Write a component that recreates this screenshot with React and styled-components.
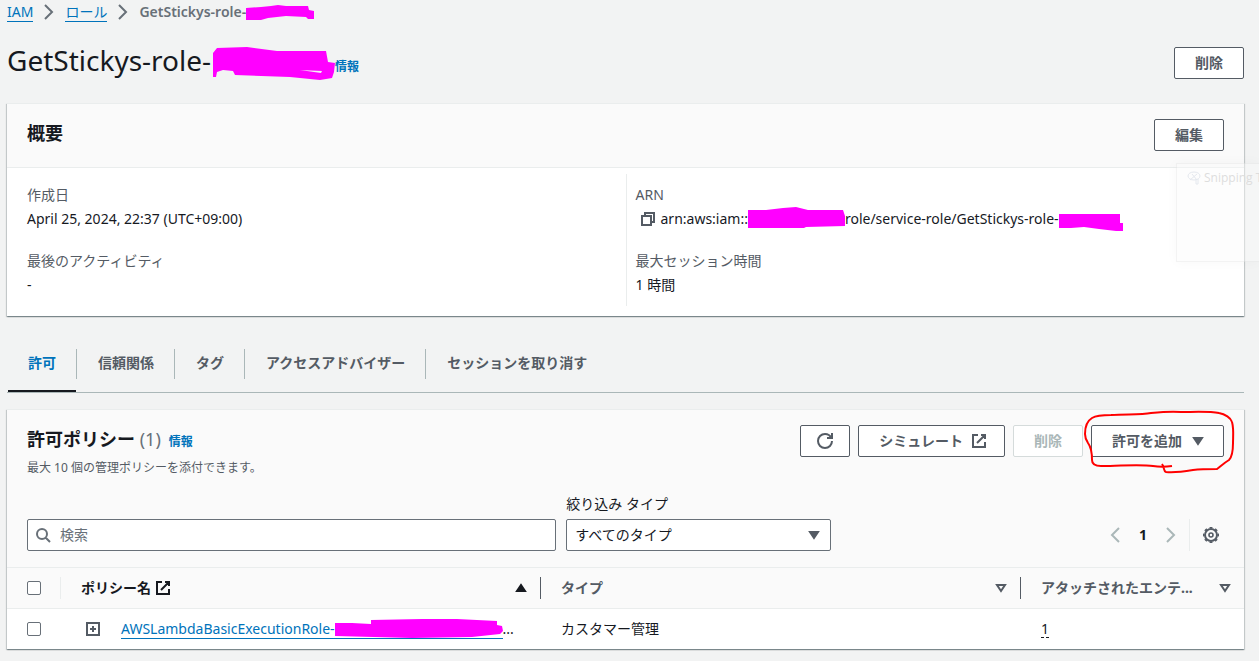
import styled, { createGlobalStyle } from "styled-components";

const App = () => {
  return (
    <>
      <GlobalStyle />
      <Page>
        <Breadcrumb aria-label="パンくずリスト">
          <CrumbLink href="#iam">IAM</CrumbLink>
          <Icon name="angleRight" />
          <CrumbLink href="#roles">ロール</CrumbLink>
          <Icon name="angleRight" />
          <CrumbCurrent>
            GetStickys-role-
            <Redaction shape="crumb" />
          </CrumbCurrent>
        </Breadcrumb>

        <TitleBar>
          <TitleGroup>
            <Title>
              GetStickys-role-
              <Redaction shape="title" />
            </Title>
            <InfoLink href="#info">情報</InfoLink>
          </TitleGroup>
          <Button type="button">削除</Button>
        </TitleBar>

        <Card>
          <SummaryHeader>
            <CardTitle>概要</CardTitle>
            <Button type="button">編集</Button>
          </SummaryHeader>
          <SummaryBody>
            <SummaryColumn>
              <Field>
                <FieldLabel>作成日</FieldLabel>
                <FieldValue>April 25, 2024, 22:37 (UTC+09:00)</FieldValue>
              </Field>
              <Field>
                <FieldLabel>最後のアクティビティ</FieldLabel>
                <FieldValue>-</FieldValue>
              </Field>
            </SummaryColumn>
            <SummaryColumn>
              <Field>
                <FieldLabel>ARN</FieldLabel>
                <FieldValue>
                  <CopyButton type="button" aria-label="ARN をコピー">
                    <Icon name="copy" />
                  </CopyButton>
                  arn:aws:iam::
                  <Redaction shape="account" />
                  role/service-role/GetStickys-role-
                  <Redaction shape="arn" />
                </FieldValue>
              </Field>
              <Field>
                <FieldLabel>最大セッション時間</FieldLabel>
                <FieldValue>1 時間</FieldValue>
              </Field>
            </SummaryColumn>
          </SummaryBody>
        </Card>

        <TabList>
          {tabs.map((tab, i) => (
            <TabItem key={tab}>
              <TabButton type="button" $active={i === 0}>
                {tab}
              </TabButton>
            </TabItem>
          ))}
        </TabList>

        <Card>
          <PolicyHeader>
            <PolicyTop>
              <div>
                <PolicyTitle>
                  <CardTitle>
                    許可ポリシー <Count>(1)</Count>
                  </CardTitle>
                  <InfoLink href="#info">情報</InfoLink>
                </PolicyTitle>
                <Description>最大 10 個の管理ポリシーを添付できます。</Description>
              </div>
              <Actions>
                <IconButton type="button" aria-label="更新">
                  <Icon name="refresh" />
                </IconButton>
                <LabelIconButton type="button">
                  シミュレート
                  <Icon name="external" />
                </LabelIconButton>
                <Button type="button" disabled>
                  削除
                </Button>
                <Circled>
                  <LabelIconButton type="button">
                    許可を追加
                    <Icon name="caretDown" />
                  </LabelIconButton>
                  <RedPen viewBox="0 0 152 66" aria-hidden="true">
                    <path d="M89 57 C82 58 76 58 70 57 C58 55 30 57 18 57 C12 57 9 55 9 51 C9 44 8 38 5 34 C3 31 2 29 2 25 C2 17 4 12 9 9 C14 6 20 6 28 6 C44 5 58 6 68 4 C78 3 88 2 98 3 C110 3 126 2 136 4 C142 5 148 9 149 13 C151 20 150 28 150 34 C150 42 149 48 146 51 C141 54 138 57 134 60 C126 60 118 60 110 61 C104 62 92 64 83 63 C80 62 82 59 79 55" />
                  </RedPen>
                </Circled>
              </Actions>
            </PolicyTop>
            <FilterRow>
              <Filters>
                <SearchBox>
                  <Icon name="search" />
                  <SearchInput type="search" placeholder="検索" aria-label="検索" />
                </SearchBox>
                <div>
                  <SelectLabel htmlFor="type-filter">絞り込み タイプ</SelectLabel>
                  <SelectBox>
                    <Select id="type-filter">
                      <option>すべてのタイプ</option>
                    </Select>
                    <Icon name="caretDown" />
                  </SelectBox>
                </div>
              </Filters>
              <Pager>
                <PagerButton type="button" aria-label="前のページ">
                  <Icon name="angleLeft" />
                </PagerButton>
                <PageNumber>1</PageNumber>
                <PagerButton type="button" aria-label="次のページ">
                  <Icon name="angleRight" />
                </PagerButton>
                <SettingsButton type="button" aria-label="設定">
                  <Icon name="gear" />
                </SettingsButton>
              </Pager>
            </FilterRow>
          </PolicyHeader>

          <Table>
            <colgroup>
              <CheckCol />
              <WideCol />
              <WideCol />
              <LastCol />
            </colgroup>
            <thead>
              <tr>
                <HeadCell>
                  <CheckHead>
                    <Checkbox type="checkbox" aria-label="すべて選択" />
                  </CheckHead>
                </HeadCell>
                <HeadCell>
                  <HeadInner $sorted>
                    <HeadText>
                      ポリシー名 <Icon name="external" />
                    </HeadText>
                    <Icon name="caretUp" />
                  </HeadInner>
                </HeadCell>
                <HeadCell>
                  <HeadInner>
                    <HeadText>タイプ</HeadText>
                    <Icon name="sort" />
                  </HeadInner>
                </HeadCell>
                <HeadCell>
                  <HeadInner $last>
                    <HeadText>アタッチされたエンテ...</HeadText>
                    <Icon name="sort" />
                  </HeadInner>
                </HeadCell>
              </tr>
            </thead>
            <tbody>
              <tr>
                <Cell>
                  <Checkbox type="checkbox" aria-label="ポリシーを選択" />
                </Cell>
                <Cell>
                  <PolicyName>
                    <ExpandButton type="button" aria-label="展開">
                      <Icon name="expand" />
                    </ExpandButton>
                    <PolicyLink href="#policy">
                      AWSLambdaBasicExecutionRole-
                      <Redaction shape="policy" />
                    </PolicyLink>
                    ...
                  </PolicyName>
                </Cell>
                <Cell>カスタマー管理</Cell>
                <Cell>
                  <EntityCount type="button">1</EntityCount>
                </Cell>
              </tr>
            </tbody>
          </Table>
        </Card>

        <GhostWindow>
          <svg width="14" height="14" viewBox="0 0 14 14" aria-hidden="true">
            <ellipse cx="7" cy="5" rx="6" ry="4" />
            <path d="M3 9 L10 3 M5 3 L10 9 M9 8v5h2v-5" />
          </svg>
          Snipping To
        </GhostWindow>
      </Page>
    </>
  );
};

export default App;

const tabs = [
  "許可",
  "信頼関係",
  "タグ",
  "アクセスアドバイザー",
  "セッションを取り消す",
];

const icons = {
  angleRight: <path d="M4 1l7 7-7 7" />,
  angleLeft: <path d="M12 1L5 8l7 7" />,
  external: <path d="M10 2h4v4M6 10l8-8M14 9v5H2V2h5" />,
  refresh: (
    <path d="M10 5h5V0M15 8c0 3.9-3.1 7-7 7s-7-3.1-7-7 3.1-7 7-7c2.8 0 5.2 1.6 6.3 4" />
  ),
  copy: <path d="M2 5h9v9H2zM5 5V2h9v9h-3" />,
  search: <path d="M12 7A5 5 0 1 1 2 7a5 5 0 0 1 10 0zM15 15l-4.500-4.500" />,
  caretDown: <path d="M4 5h8l-4 6z" fill="currentColor" />,
  caretUp: <path d="M4 11h8L8 5z" fill="currentColor" />,
  sort: <path d="M4 5h8l-4 6z" />,
  expand: <path d="M2 2h12v12H2zM8 5v6M5 8h6" />,
  gear: (
    <>
      <circle cx="8" cy="8" r="6" />
      <circle
        cx="8"
        cy="8"
        r="7.4"
        strokeWidth="1.4"
        pathLength="32"
        strokeDasharray="2 2"
        strokeDashoffset="1"
      />
      <circle cx="8" cy="8" r="2" strokeWidth="1.6" />
    </>
  ),
};

const Icon = ({ name }) => (
  <IconSvg viewBox="0 0 16 16" aria-hidden="true">
    {icons[name]}
  </IconSvg>
);

// magenta marker strokes laid over private parts of names
const redactions = {
  crumb: {
    y: -1,
    w: 68,
    h: 17,
    d: "M0 3L15 2L25 1L32 0L40 1L62 1L63 5L68 6V14H62L60 12L40 11L22 13L15 15H0Z",
  },
  title: {
    y: -8,
    w: 122,
    h: 42,
    d: "M0 6L4 1L34 0L64 4H113L115 15L122 16L121 25L119 31L107 33L77 30L22 28L20 24L10 23L4 25L3 30H0ZM87 23L108 26L109 24Z",
  },
  account: {
    y: 0,
    w: 97,
    h: 24,
    d: "M0 3H18L35 1L48 0L60 3H95L97 9V19L58 20L56 21H0Z",
  },
  arn: {
    y: -7,
    w: 64,
    h: 26,
    d: "M0 1H61V10H64V18H57L40 16L25 14L12 15H0Z",
  },
  policy: {
    y: 0,
    w: 168,
    h: 20,
    d: "M0 4H17L36 5V1L87 0H122L162 2V6L167 7L168 12L165 15L137 18L77 19L0 17Z",
  },
};

const Redaction = ({ shape }) => {
  const { y, w, h, d } = redactions[shape];
  return (
    <Marker width={w} height={h} viewBox={`0 ${y} ${w} ${h}`} aria-hidden="true">
      <path d={d} fillRule="evenodd" />
    </Marker>
  );
};

const GlobalStyle = createGlobalStyle`
  * {
    box-sizing: border-box;
  }
  body {
    margin: 0;
    background: #f2f3f3;
    color: #16191f;
    font-family: "Noto Sans", "Noto Sans CJK JP", sans-serif;
    font-size: 14px;
    line-height: 22px;
  }
  button, input, select {
    font: inherit;
    color: inherit;
  }
  h1, h2, p, dl, dd, ul {
    margin: 0;
    padding: 0;
  }
`;

const IconSvg = styled.svg`
  width: 16px;
  height: 16px;
  flex: none;
  fill: none;
  stroke: currentColor;
  stroke-width: 2;
`;

const Marker = styled.svg`
  flex: none;
  fill: #ff00ff;
`;

const Page = styled.main`
  position: relative;
  padding: 0 15px 11px 7px;
  overflow: hidden;
`;

const Breadcrumb = styled.nav`
  display: flex;
  align-items: center;
  gap: 8px;
  height: 24px;
  color: #687078;
`;

const CrumbLink = styled.a`
  height: 20px;
  line-height: 20px;
  color: #0073bb;
  text-decoration: none;
  border-bottom: 1px solid #0073bb;
`;

const CrumbCurrent = styled.span`
  display: flex;
  align-items: center;
  font-weight: 600;
`;

const TitleBar = styled.header`
  display: flex;
  justify-content: space-between;
  align-items: center;
  height: 32px;
  margin: 23px 0 24px;
`;

const TitleGroup = styled.div`
  display: flex;
  align-items: baseline;
`;

const Title = styled.h1`
  display: flex;
  align-items: center;
  gap: 2px;
  height: 36px;
  margin-bottom: 6px;
  font-size: 28px;
  font-weight: 400;
  line-height: 36px;
`;

const InfoLink = styled.a`
  color: #0073bb;
  font-size: 12px;
  font-weight: 600;
  text-decoration: none;
`;

const Button = styled.button`
  display: inline-flex;
  align-items: center;
  height: 32px;
  padding: 0 20px;
  border: 1px solid #545b64;
  border-radius: 2px;
  background: #fff;
  color: #545b64;
  font-weight: 700;
  white-space: nowrap;

  &:disabled {
    border-color: #d5dbdb;
    color: #aab7b8;
  }
`;

const IconButton = styled(Button)`
  padding: 0 16px;
`;

const LabelIconButton = styled(Button)`
  gap: 8px;
  padding: 0 17px 0 20px;
`;

const Card = styled.section`
  background: #fff;
  border-top: 1px solid #eaeded;
  box-shadow: 0 1px 1px 0 rgba(0, 28, 36, 0.3),
    1px 1px 1px 0 rgba(0, 28, 36, 0.15), -1px 1px 1px 0 rgba(0, 28, 36, 0.15);
`;

const SummaryHeader = styled.div`
  display: flex;
  justify-content: space-between;
  align-items: flex-start;
  padding: 15px 20px 16px;
  background: #fafafa;
  border-bottom: 1px solid #eaeded;
`;

const CardTitle = styled.h2`
  font-size: 18px;
  font-weight: 700;
  line-height: 28px;
`;

const SummaryBody = styled.div`
  display: grid;
  grid-template-columns: 1fr 1fr;
  padding: 6px 20px 10px;
`;

const SummaryColumn = styled.dl`
  display: flex;
  flex-direction: column;
  gap: 20px;
  padding: 10px 0;

  & + & {
    padding-left: 9px;
    border-left: 1px solid #eaeded;
  }
`;

const Field = styled.div`
  display: flex;
  flex-direction: column;
  gap: 2px;
`;

const FieldLabel = styled.dt`
  color: #545b64;
`;

const FieldValue = styled.dd`
  display: flex;
  align-items: center;
  height: 22px;
  white-space: nowrap;
`;

const CopyButton = styled.button`
  display: flex;
  padding: 0 5px 0 4px;
  border: 0;
  background: none;
  color: #545b64;
`;

const TabList = styled.ul`
  display: flex;
  gap: 1px;
  height: 57px;
  margin: 20px 0 16px;
  padding-left: 1px;
  border-bottom: 1px solid #aab7b8;
  list-style: none;
`;

const TabItem = styled.li`
  display: flex;
  align-items: center;

  &:not(:last-child)::after {
    content: "";
    width: 1px;
    height: 30px;
    background: #aab7b8;
  }
`;

const TabButton = styled.button`
  height: 100%;
  padding: 0 20px;
  border: 0;
  border-bottom: 2px solid ${({ $active }) => ($active ? "#16191f" : "transparent")};
  background: none;
  color: ${({ $active }) => ($active ? "#0073bb" : "#545b64")};
  font-weight: 700;
`;

const PolicyHeader = styled.div`
  padding: 15px 20px 16px;
  background: #fafafa;
  border-bottom: 1px solid #eaeded;
`;

const PolicyTop = styled.div`
  display: flex;
  justify-content: space-between;
`;

const PolicyTitle = styled.div`
  display: flex;
  align-items: baseline;
  gap: 8px;
  height: 32px;
`;

const Count = styled.span`
  color: #687078;
  font-weight: 400;
`;

const Description = styled.p`
  color: #545b64;
  font-size: 12px;
`;

const Actions = styled.div`
  display: flex;
  gap: 8px;
`;

const Circled = styled.div`
  position: relative;
`;

const RedPen = styled.svg`
  position: absolute;
  top: -16px;
  left: -8px;
  width: 152px;
  height: 66px;
  fill: none;
  stroke: #ff0000;
  stroke-width: 2;
  pointer-events: none;
`;

const FilterRow = styled.div`
  display: flex;
  justify-content: space-between;
  align-items: flex-end;
  margin-top: 14px;
`;

const Filters = styled.div`
  display: grid;
  grid-template-columns: 2fr 1fr;
  align-items: end;
  gap: 10px;
  flex: 0 1 804px;
`;

const SearchBox = styled.div`
  display: flex;
  align-items: center;
  gap: 9px;
  height: 32px;
  padding: 0 7px;
  border: 1px solid #687078;
  border-radius: 2px;
  background: #fff;
  color: #687078;
`;

const SearchInput = styled.input`
  flex: 1;
  min-width: 0;
  padding: 0;
  border: 0;
  outline: 0;
  background: none;

  &::placeholder {
    color: #687078;
  }
`;

const SelectLabel = styled.label`
  display: block;
  margin-bottom: 4px;
`;

const SelectBox = styled.div`
  display: grid;
  align-items: center;
  color: #545b64;

  > * {
    grid-area: 1 / 1;
  }

  > svg {
    justify-self: end;
    margin-right: 9px;
    pointer-events: none;
  }
`;

const Select = styled.select`
  width: 100%;
  height: 32px;
  padding: 0 8px;
  border: 1px solid #687078;
  border-radius: 2px;
  background: #fff;
  color: #16191f;
  appearance: none;
`;

const Pager = styled.div`
  display: flex;
  align-items: center;
  height: 32px;
`;

const PagerButton = styled.button`
  display: flex;
  padding: 0;
  border: 0;
  background: none;
  color: #aab7b8;
`;

const PageNumber = styled.span`
  width: 40px;
  text-align: center;
  font-weight: 700;
`;

const SettingsButton = styled.button`
  display: flex;
  align-items: center;
  height: 32px;
  margin-left: 10px;
  padding: 0 5px 0 13px;
  border: 0;
  border-left: 1px solid #eaeded;
  background: none;
  color: #545b64;
`;

const Table = styled.table`
  width: 100%;
  table-layout: fixed;
  border-collapse: collapse;
`;

const CheckCol = styled.col`
  width: 54px;
`;

const WideCol = styled.col`
  width: 480px;
`;

const LastCol = styled.col`
  width: auto;
`;

const HeadCell = styled.th`
  height: 40px;
  padding: 0;
  background: #fafafa;
  border-bottom: 1px solid #eaeded;
  text-align: left;
`;

const HeadInner = styled.div`
  display: flex;
  align-items: center;
  justify-content: space-between;
  height: 22px;
  padding: 0 11px 0 20px;
  border-right: ${({ $last }) => ($last ? "0" : "1px solid #545b64")};
  color: ${({ $sorted }) => ($sorted ? "#16191f" : "#545b64")};
`;

const CheckHead = styled.div`
  display: flex;
  align-items: center;
  height: 22px;
  padding-left: 20px;
  border-right: 1px solid #eaeded;
`;

const HeadText = styled.span`
  white-space: nowrap;

  > svg {
    vertical-align: -3px;
  }
`;

const Cell = styled.td`
  height: 41px;
  padding: 0 0 0 20px;
`;

const Checkbox = styled.input`
  display: block;
  width: 14px;
  height: 14px;
  margin: 0;
  appearance: none;
  border: 1px solid #687078;
  border-radius: 2px;
  background: #fff;
`;

const PolicyName = styled.div`
  display: flex;
  align-items: center;
`;

const ExpandButton = styled.button`
  display: flex;
  padding: 0 20px 0 4px;
  border: 0;
  background: none;
  color: #545b64;
`;

const PolicyLink = styled.a`
  display: flex;
  align-items: center;
  height: 20px;
  margin-top: 1px;
  color: #0073bb;
  text-decoration: none;
  border-bottom: 1px solid #0073bb;
`;

const EntityCount = styled.button`
  padding: 0;
  border: 0;
  border-bottom: 1px dashed #16191f;
  background: none;
  line-height: 16px;
`;

const GhostWindow = styled.aside`
  position: absolute;
  top: 163px;
  right: 0;
  width: 83px;
  height: 99px;
  padding: 3px 0 0 10px;
  overflow: hidden;
  white-space: nowrap;
  border: 1px solid rgba(0, 0, 0, 0.04);
  border-right: 0;
  background: rgba(250, 250, 250, 0.4);
  box-shadow: 0 0 12px rgba(0, 0, 0, 0.03);
  color: #dddddd;
  font-family: "Open Sans", sans-serif;
  font-size: 12px;

  > svg {
    vertical-align: -3px;
    margin-right: 3px;
    fill: none;
    stroke: #e4e8ee;
  }
`;
